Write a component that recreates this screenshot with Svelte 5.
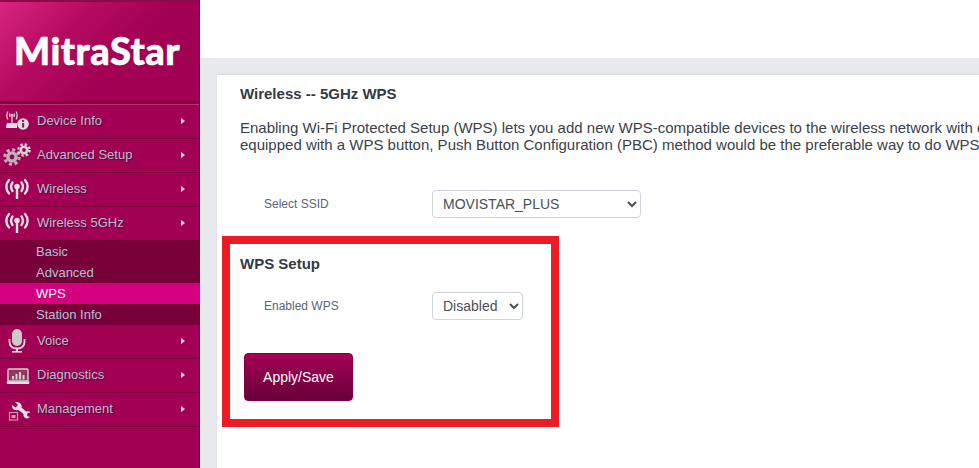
<script>
  const menuTop = [
    { label: 'Device Info', icon: 'info' },
    { label: 'Advanced Setup', icon: 'gears' },
    { label: 'Wireless', icon: 'wifi' },
    { label: 'Wireless 5GHz', icon: 'wifi' }
  ];
  const subItems = ['Basic', 'Advanced', 'WPS', 'Station Info'];
  const menuBottom = [
    { label: 'Voice', icon: 'mic' },
    { label: 'Diagnostics', icon: 'laptop' },
    { label: 'Management', icon: 'wrench' }
  ];
</script>

{#snippet icon(name)}
  <svg class="icon" width="30" height="26" viewBox="0 0 30 26">
    {#if name === 'wifi'}
      <g fill="none" stroke="#e4dfe3" stroke-width="2.4" stroke-linecap="round">
        <path d="M6 3C2.5 7 2.5 12.500 6 16.500" />
        <path d="M9.500 5.500C7.800 8 7.800 11.500 9.500 14" />
        <path d="M22 3C25.500 7 25.500 12.500 22 16.500" />
        <path d="M18.500 5.500C20.200 8 20.200 11.500 18.500 14" />
      </g>
      <circle cx="14" cy="9.500" r="2.800" fill="#e4dfe3" />
      <rect x="12.800" y="11" width="2.400" height="11" fill="#e4dfe3" />
    {:else if name === 'info'}
      <g fill="none" stroke="#e4dfe3" stroke-width="1.200">
        <path d="M5 2.500C3.500 5 3.500 8 5 10.500" />
        <path d="M13 2.500C14.500 5 14.500 8 13 10.500" />
        <path d="M7 4.500C6.400 5.500 6.400 7 7 8" />
        <path d="M11 4.500C11.600 5.500 11.600 7 11 8" />
      </g>
      <circle cx="9" cy="6.200" r="1.400" fill="#e4dfe3" />
      <rect x="8.400" y="7" width="1.200" height="7" fill="#e4dfe3" />
      <path d="M4 14H14V19H3Q3 16 4 14Z" fill="#e4dfe3" />
      <circle cx="20" cy="15" r="5.800" fill="#e4dfe3" />
      <rect x="19" y="14" width="2.200" height="4.600" fill="#7d2a50" />
      <rect x="19" y="11" width="2.200" height="2" fill="#7d2a50" />
    {:else if name === 'gears'}
      <circle cx="9" cy="14" r="5.800" fill="#bdb5ba" />
      <circle cx="9" cy="14" r="7.200" fill="none" stroke="#bdb5ba" stroke-width="3" stroke-dasharray="3 2.650" />
      <circle cx="9" cy="14" r="2.400" fill="#a20052" />
      <circle cx="21" cy="7" r="4.500" fill="#d8d2d6" />
      <circle cx="21" cy="7" r="5.600" fill="none" stroke="#d8d2d6" stroke-width="2.400" stroke-dasharray="2.400 2" />
      <circle cx="21" cy="7" r="1.900" fill="#a20052" />
    {:else if name === 'mic'}
      <rect x="9" y="0" width="10" height="17" rx="5" fill="#cfc9cd" />
      <path d="M6.500 10V12.500C6.500 17 9.500 19.500 14 19.500S21.500 17 21.500 12.500V10" fill="none" stroke="#e4dfe3" stroke-width="1.800" />
      <rect x="13.100" y="19.500" width="1.800" height="3" fill="#e4dfe3" />
      <rect x="9" y="22" width="10" height="1.600" fill="#e4dfe3" />
    {:else if name === 'laptop'}
      <path d="M6 6H24Q25 6 25 7V18H5V7Q5 6 6 6Z" fill="#8d3a60" stroke="#d8d1d5" stroke-width="1.400" />
      <path d="M9 16.500V13H11V16.500ZM12.500 16.500V11H14.500V16.500ZM16 16.500V9H18V16.500ZM19.500 16.500V12H21.500V16.500Z" fill="#d8d1d5" />
      <path d="M3.500 18.500H26.500L26 21H4Z" fill="#e4dfe3" />
    {:else}
      <path d="M9 8L12.500 10.500L15 8L12 5Q17 4.500 18.500 8Q19 9.500 18.500 10.500L23 14.500Q26 13.500 27.500 15.500L24.500 16L24 19L27 20Q24.500 22.500 21.500 20.500Q20 19 20.500 17L15.500 13Q12 14 10 12Q8.500 10 9 8Z" fill="#e4dfe3" />
      <rect x="6.500" y="15.500" width="8" height="7.500" fill="none" stroke="#c9a0b5" stroke-width="1.100" />
      <rect x="8.500" y="18" width="4" height="3" fill="#c9a0b5" />
    {/if}
  </svg>
{/snippet}

{#snippet row(item)}
  <div class="menu-row">
    {@render icon(item.icon)}
    <span class="menu-label">{item.label}</span>
    <span class="arrow"></span>
  </div>
{/snippet}

<div class="shell">
  <aside class="sidebar">
    <div class="brand"><span class="logo">MitraStar</span></div>
    <nav class="menu">
      {#each menuTop as item}
        {@render row(item)}
      {/each}
      <div class="submenu">
        {#each subItems as sub}
          <div class="sub-row" class:active={sub === 'WPS'}>{sub}</div>
        {/each}
      </div>
      {#each menuBottom as item}
        {@render row(item)}
      {/each}
    </nav>
  </aside>

  <main class="main">
    <div class="topbar"></div>
    <div class="band"></div>
    <div class="content">
      <h1>Wireless -- 5GHz WPS</h1>
      <p class="intro">
        <span>Enabling Wi-Fi Protected Setup (WPS) lets you add new WPS-compatible devices to the wireless network with ease. If your device is</span>
        <span>equipped with a WPS button, Push Button Configuration (PBC) method would be the preferable way to do WPS.</span>
      </p>
      <div class="field ssid">
        <label for="ssid">Select SSID</label>
        <select id="ssid" class="ssid-select"><option>MOVISTAR_PLUS</option></select>
      </div>
      <h2>WPS Setup</h2>
      <div class="field enabled">
        <label for="wps">Enabled WPS</label>
        <select id="wps" class="wps-select"><option>Disabled</option><option>Enabled</option></select>
      </div>
      <button class="apply">Apply/Save</button>
      <div class="highlight"></div>
    </div>
  </main>
</div>

<style>
  :global(body) {
    margin: 0;
    overflow: hidden;
    background: #fff;
    font-family: "Liberation Sans", Arial, sans-serif;
  }

  .shell {
    display: grid;
    grid-template-columns: 200px 1fr;
    height: 468px;
    overflow: hidden;
  }

  .sidebar {
    background: #a20052;
    border-right: 1px solid #7a0a42;
    box-sizing: border-box;
  }

  .brand {
    height: 104px;
    box-sizing: border-box;
    border-top: 2px solid #8c0a49;
    border-bottom: 3px solid #860043;
    background: linear-gradient(135deg, #d9247f 0%, #b40b60 32%, #a20052 62%);
    display: flex;
    padding: 26px 0 0 14px;
  }

  .logo {
    color: #fff;
    font-family: Lato, sans-serif;
    font-weight: 900;
    font-size: 38px;
    line-height: 44px;
    height: 44px;
    letter-spacing: 0.5px;
    -webkit-text-stroke: 0.6px #fff;
  }

  .menu {
    border-top: 1px solid #b8326f;
  }

  .menu-row {
    height: 33px;
    border-bottom: 1px solid #770038;
    display: flex;
    align-items: center;
    color: #b0c0d6;
    font-size: 13px;
    text-shadow: 1px 1px 1px rgba(60, 0, 30, 0.6);
  }

  .icon {
    flex: none;
    margin: 0 4px 0 3px;
  }

  .menu-label {
    flex: 1;
    margin-bottom: 2px;
  }

  .arrow {
    width: 0;
    height: 0;
    margin: 0 14px 2px 0;
    border-left: 4px solid #e8e4e6;
    border-top: 3px solid transparent;
    border-bottom: 3px solid transparent;
  }

  .submenu {
    background: #770038;
    margin: -1px -1px 0 0;
    padding-top: 1px;
    position: relative;
  }

  .sub-row {
    height: 21px;
    line-height: 21px;
    padding-left: 36px;
    color: #b0c0d6;
    font-size: 13px;
  }

  .sub-row.active {
    background: #d4007f;
    color: #fff;
  }

  .main {
    min-width: 0;
    overflow: hidden;
    background: #e8e9ed;
  }

  .topbar {
    height: 58px;
    background: #fff;
  }

  .band {
    height: 17px;
    background: #e8e9ed;
  }

  .content {
    position: relative;
    height: 393px;
    box-sizing: border-box;
    margin-left: 17px;
    padding: 11px 0 0 23px;
    background: #fff;
    box-shadow: 0 -1px 2px rgba(0, 0, 0, 0.08);
    color: #3a3f4a;
  }

  h1,
  h2 {
    margin: 0;
    font-size: 15px;
    line-height: 16px;
    font-weight: bold;
    color: #343a45;
  }

  h2 {
    margin-top: 38px;
  }

  .intro {
    margin: 17px 0 0;
    font-size: 15px;
    line-height: 17px;
    white-space: nowrap;
  }

  .intro span {
    display: block;
  }

  .field {
    display: flex;
    align-items: center;
    padding-left: 24px;
  }

  .field.ssid {
    margin-top: 37px;
  }

  .field.enabled {
    margin-top: 20px;
  }

  label {
    width: 168px;
    font-size: 12px;
    color: #5b6478;
  }

  select {
    height: 28px;
    box-sizing: border-box;
    padding: 0 6px;
    background: #fff;
    border: 1px solid #ced4da;
    border-radius: 4px;
    color: #495057;
    font-family: inherit;
    font-size: 14px;
  }

  .ssid-select {
    width: 209px;
  }

  .wps-select {
    width: 91px;
  }

  .apply {
    display: block;
    width: 109px;
    height: 48px;
    margin: 33px 0 0 4px;
    border: 1px solid #7c0040;
    border-radius: 4px;
    background: linear-gradient(#a50055, #68003a);
    color: #fff;
    font-family: inherit;
    font-size: 14px;
  }

  .highlight {
    position: absolute;
    left: 5px;
    top: 161px;
    width: 337px;
    height: 191px;
    box-sizing: border-box;
    border: 8px solid #ed1c24;
    pointer-events: none;
  }
</style>
